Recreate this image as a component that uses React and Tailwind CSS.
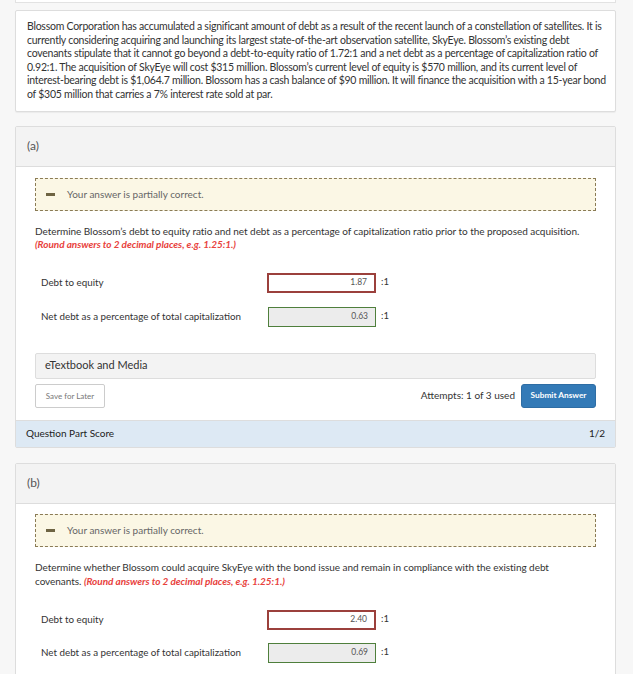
import React from "react";

function Partial() {
  return (
    <div className="flex h-[33px] items-center border border-dashed border-[#8a7b55] bg-[#fbf7e5] pl-[10px]">
      <span className="block h-[3px] w-[9px] bg-[#6e6443]" />
      <span className="ml-[12px] text-[10px] text-[#666]">Your answer is partially correct.</span>
    </div>
  );
}

function Row({ label, value, wrong }) {
  return (
    <div className="flex h-[20px] items-center">
      <div className="w-[232px] pl-[6px] text-[9.8px] text-[#333]">{label}</div>
      {wrong ? (
        <div className="flex h-[20px] w-[109px] items-center justify-end border-2 border-[#9b403c] bg-white pr-[7px] text-[8.5px] text-[#555]">
          {value}
        </div>
      ) : (
        <div className="ml-[1px] flex h-[20px] w-[108px] items-center justify-end border border-[#4f7f3c] bg-[#ececec] pr-[7px] text-[8.5px] text-[#555]">
          {value}
        </div>
      )}
      <span className="ml-[5px] text-[9.5px] text-[#333]">:1</span>
    </div>
  );
}

const problemLines = [
  "Blossom Corporation has accumulated a significant amount of debt as a result of the recent launch of a constellation of satellites. It is",
  "currently considering acquiring and launching its largest state-of-the-art observation satellite, SkyEye. Blossom’s existing debt",
  "covenants stipulate that it cannot go beyond a debt-to-equity ratio of 1.72:1 and a net debt as a percentage of capitalization ratio of",
  "0.92:1. The acquisition of SkyEye will cost $315 million. Blossom’s current level of equity is $570 million, and its current level of",
  "interest-bearing debt is $1,064.7 million. Blossom has a cash balance of $90 million. It will finance the acquisition with a 15-year bond",
  "of $305 million that carries a 7% interest rate sold at par.",
];

export default function App() {
  return (
    <div className="min-h-screen bg-[#f7f7f7] font-['Lato',sans-serif] text-[#333]">
      <div className="ml-[15px] mr-[17px]">
        <div className="h-[3px] border-x border-b border-[#e2e2e2] bg-white" />
        <div className="mt-[7px] rounded-[2px] border border-[#ddd] bg-white px-[11px] py-[9px] text-[10.5px] leading-[13.6px] tracking-[-0.25px] text-[#333] shadow-[0_1px_1px_rgba(0,0,0,0.05)]">
          {problemLines.map((l, i) => (
            <div key={i} className="whitespace-nowrap">{l}</div>
          ))}
        </div>

        {/* Part (a) */}
        <div className="mt-[14px] rounded-[2px] border border-[#ddd] bg-white">
          <div className="flex h-[40px] items-center border-b border-[#ddd] bg-[#f3f3f3] px-[11px] text-[12px] text-[#555]">(a)</div>
          <div className="px-[19px] pt-[11px]">
            <Partial />
            <p className="mt-[14px] text-[10px] leading-[13.5px] tracking-[-0.05px] text-[#333]">
              Determine Blossom’s debt to equity ratio and net debt as a percentage of capitalization ratio prior to the proposed acquisition.
              <br />
              <span className="font-bold italic text-[#e8413c]">(Round answers to 2 decimal places, e.g. 1.25:1.)</span>
            </p>
            <div className="mt-[21px] flex flex-col gap-[14px]">
              <Row label="Debt to equity" value="1.87" wrong />
              <Row label="Net debt as a percentage of total capitalization" value="0.63" />
            </div>
            <div className="mt-[26px] flex h-[26px] items-center rounded-[2px] border border-[#ddd] bg-[#f3f3f3] px-[9px] text-[11px] text-[#333]">
              eTextbook and Media
            </div>
            <div className="mt-[5px] flex items-center justify-between pb-[12px]">
              <button className="h-[24px] w-[70px] rounded-[2px] border border-[#ccc] bg-white text-[8px] text-[#777]">Save for Later</button>
              <div className="flex items-center gap-[6px]">
                <span className="text-[10px] text-[#333]">Attempts: 1 of 3 used</span>
                <button className="h-[24px] w-[75px] rounded-[3px] border border-[#2e6da4] bg-[#337ab7] text-[8.3px] font-bold text-white">Submit Answer</button>
              </div>
            </div>
          </div>
          <div className="flex h-[27px] items-center justify-between border-t border-[#ddd] bg-[#dde9f4] px-[10px] text-[10px] text-[#222]">
            <span>Question Part Score</span>
            <span>1/2</span>
          </div>
        </div>

        {/* Part (b) */}
        <div className="mt-[15px] rounded-[2px] border border-[#ddd] bg-white">
          <div className="flex h-[40px] items-center border-b border-[#ddd] bg-[#f3f3f3] px-[11px] text-[12px] text-[#555]">(b)</div>
          <div className="px-[19px] pt-[10px] pb-[20px]">
            <Partial />
            <p className="mt-[13px] text-[10px] leading-[14px] tracking-[-0.05px] text-[#333]">
              Determine whether Blossom could acquire SkyEye with the bond issue and remain in compliance with the existing debt
              <br />
              covenants. <span className="font-bold italic text-[#e8413c]">(Round answers to 2 decimal places, e.g. 1.25:1.)</span>
            </p>
            <div className="mt-[22px] flex flex-col gap-[13px]">
              <Row label="Debt to equity" value="2.40" wrong />
              <Row label="Net debt as a percentage of total capitalization" value="0.69" />
            </div>
          </div>
        </div>
      </div>
    </div>
  );
}
